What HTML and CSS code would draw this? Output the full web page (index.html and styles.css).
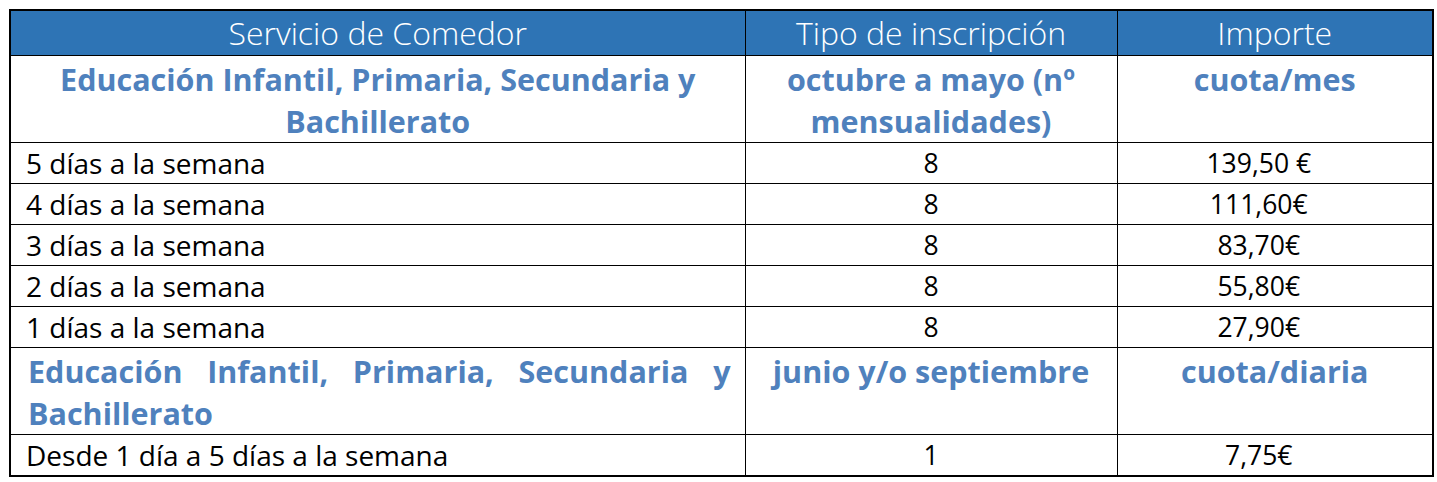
FILE: index.html
```html
<!DOCTYPE html>
<html lang="es">
<head>
<meta charset="utf-8">
<title>Servicio de Comedor</title>
<link rel="stylesheet" href="styles.css">
</head>
<body>
<table class="fees">
  <colgroup>
    <col class="c1">
    <col class="c2">
    <col class="c3">
  </colgroup>
  <thead>
    <tr class="head">
      <th>Servicio de Comedor</th>
      <th>Tipo de inscripción</th>
      <th>Importe</th>
    </tr>
  </thead>
  <tbody>
    <tr class="group">
      <td class="center">Educación Infantil, Primaria, Secundaria y Bachillerato</td>
      <td>octubre a mayo (nº mensualidades)</td>
      <td>cuota/mes</td>
    </tr>
    <tr class="row"><td>5 días a la semana</td><td>8</td><td class="amount">139,50 €</td></tr>
    <tr class="row"><td>4 días a la semana</td><td>8</td><td class="amount">111,60€</td></tr>
    <tr class="row"><td>3 días a la semana</td><td>8</td><td class="amount">83,70€</td></tr>
    <tr class="row"><td>2 días a la semana</td><td>8</td><td class="amount">55,80€</td></tr>
    <tr class="row"><td>1 días a la semana</td><td>8</td><td class="amount">27,90€</td></tr>
    <tr class="group">
      <td class="justify">Educación Infantil, Primaria, Secundaria y Bachillerato</td>
      <td>junio y/o septiembre</td>
      <td>cuota/diaria</td>
    </tr>
    <tr class="row"><td>Desde 1 día a 5 días a la semana</td><td>1</td><td class="amount">7,75€</td></tr>
  </tbody>
</table>
</body>
</html>
```

FILE: styles.css
```css
html, body {
  background: #ffffff;
}
body {
  margin: 0;
  padding: 9px 0 0 9px;
  font-family: "Open Sans", "Noto Sans", sans-serif;
  color: #000000;
}
.fees {
  border-collapse: collapse;
  table-layout: fixed;
  width: 1423px;
  border: 2px solid #000;
}
.c1 { width: 735px; }
.c2 { width: 372px; }
.c3 { width: 316px; }
.fees th,
.fees td {
  border: 1px solid #000;
  padding: 0;
}
.head th {
  background: #2e74b5;
  color: #ffffff;
  font-weight: 300;
  font-size: 32px;
  height: 44px;
  line-height: 44px;
  text-align: center;
  vertical-align: middle;
}
.group td {
  height: 84px;
  vertical-align: top;
  color: #4f81bd;
  font-weight: 700;
  font-size: 30.5px;
  line-height: 42px;
  text-align: center;
  padding: 2px 8px 0;
}
.group td.justify {
  text-align: justify;
  text-align-last: left;
  padding: 2px 14px 0 17px;
}
.row td {
  height: 40px;
  font-size: 26.5px;
  line-height: 40px;
  text-align: center;
  vertical-align: middle;
  font-stretch: 91%;
}
.row td.amount {
  padding-right: 32px;
}
.row td:first-child {
  text-align: left;
  padding-left: 15px;
  font-size: 28px;
  font-stretch: 100%;
}
```
